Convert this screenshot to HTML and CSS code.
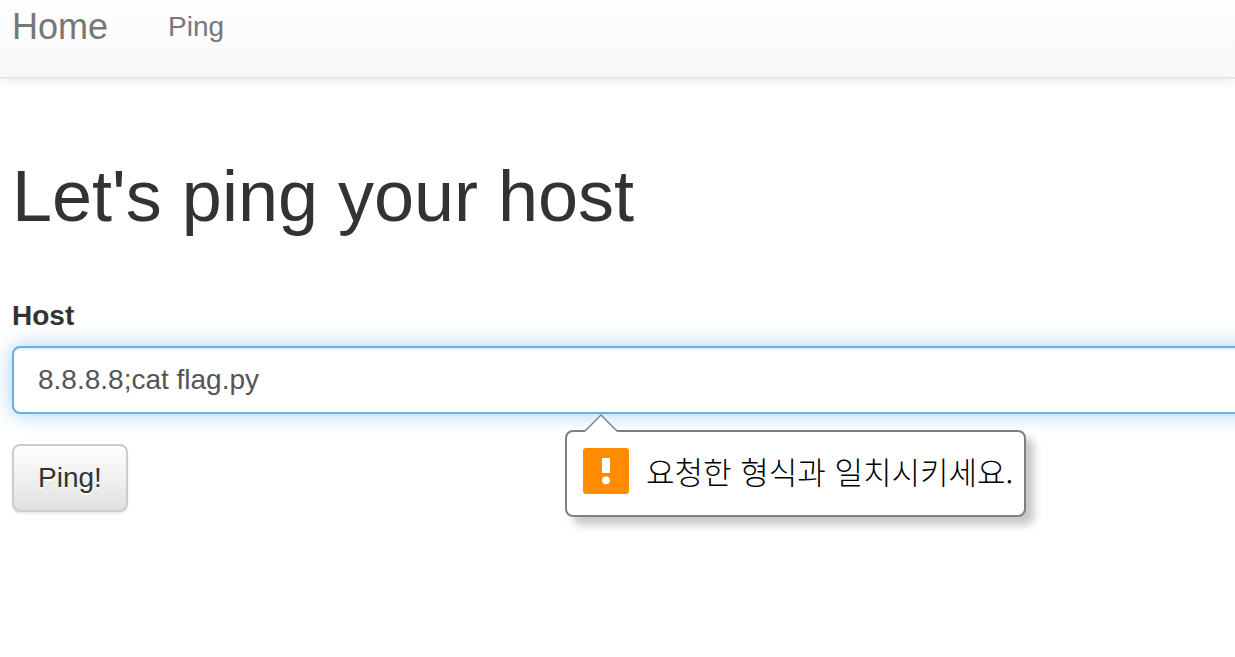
FILE: index.html
```html
<!DOCTYPE html>
<html lang="ko">
<head>
    <meta charset="UTF-8">
    <meta name="viewport" content="width=device-width, initial-scale=1">
    <title>Ping</title>
    <link rel="stylesheet" href="styles.css">
</head>
<body>
    <nav class="navbar">
        <a class="navbar-brand" href="/">Home</a>
        <a class="navbar-link" href="/ping">Ping</a>
    </nav>

    <main class="container">
        <h1>Let's ping your host</h1>

        <form method="POST" novalidate>
            <div class="form-group">
                <label for="host">Host</label>
                <div class="field">
                    <input type="text" class="form-control" id="host" name="host" value="8.8.8.8;cat flag.py" autocomplete="off" spellcheck="false">
                    <!-- validation message -->
                    <div class="bubble" role="alert">
                        <svg class="bubble-arrow" width="36" height="18" viewBox="0 0 36 18" aria-hidden="true">
                            <path d="M1 18 L18 1 L35 18 Z" fill="#fff"/>
                            <path d="M1 17 L2 17 L18 1 L34 17 L35 17" fill="none" stroke="#808080" stroke-width="1.4"/>
                        </svg>
                        <svg class="bubble-icon" width="46" height="46" viewBox="0 0 46 46" aria-hidden="true">
                            <rect width="46" height="46" rx="3" fill="#ff8c00"/>
                            <path d="M19 10h8v15h-8z" fill="#fff"/>
                            <circle cx="23" cy="32.3" r="3.9" fill="#fff"/>
                        </svg>
                        <span class="bubble-text">요청한 형식과 일치시키세요.</span>
                    </div>
                </div>
            </div>
            <button type="submit" class="btn">Ping!</button>
        </form>
    </main>
</body>
</html>
```

FILE: styles.css
```css
* {
    box-sizing: border-box;
}

body {
    margin: 0;
    min-height: 100vh;
    font-family: "Helvetica Neue", Helvetica, Arial, "Liberation Sans", "Noto Sans CJK KR", sans-serif;
    font-size: 28px;
    line-height: 40px;
    color: #333;
    background: #fff;
    overflow-x: hidden;
}

.navbar {
    display: flex;
    align-items: center;
    gap: 60px;
    padding: 7px 12px 30px;
    background: linear-gradient(to bottom, #fefefe, #f8f8f8);
    border-bottom: 2px solid #e7e7e7;
    box-shadow: 0 2px 10px rgba(0, 0, 0, 0.075);
}

.navbar a {
    color: #777;
    text-decoration: none;
    text-shadow: 0 2px 0 rgba(255, 255, 255, 0.25);
}

.navbar-brand {
    font-size: 36px;
}

.container {
    padding: 77px 0 0 12px;
}

h1 {
    margin: 0 0 60px;
    font-size: 72px;
    font-weight: 500;
    line-height: 80px;
}

.form-group {
    margin-bottom: 30px;
}

label {
    display: block;
    margin-bottom: 10px;
    font-weight: bold;
}

.field {
    position: relative;
    margin-right: -24px;
}

.form-control {
    display: block;
    width: 100%;
    height: 68px;
    padding: 12px 24px;
    font: inherit;
    color: #555;
    background: #fff;
    border: 2px solid #66afe9;
    border-radius: 8px;
    outline: 0;
    box-shadow: inset 0 2px 2px rgba(0, 0, 0, 0.075), 0 0 20px rgba(102, 175, 233, 0.6);
}

.btn {
    height: 68px;
    padding: 0 24px;
    font: inherit;
    color: #333;
    text-shadow: 0 2px 0 #fff;
    background: linear-gradient(to bottom, #fff, #e0e0e0);
    border: 2px solid #ccc;
    border-radius: 8px;
    box-shadow: inset 0 2px 0 rgba(255, 255, 255, 0.15), 0 2px 2px rgba(0, 0, 0, 0.075);
    cursor: pointer;
}

.bubble {
    position: absolute;
    top: 84px;
    left: 553px;
    display: flex;
    align-items: center;
    gap: 17px;
    padding: 16px 11px 21px 16px;
    color: #000;
    white-space: nowrap;
    background: #fff;
    border: 2px solid #808080;
    border-radius: 8px;
    box-shadow: 8px 8px 8px rgba(0, 0, 0, 0.22);
}

.bubble-arrow {
    position: absolute;
    top: -18px;
    left: 16px;
}

.bubble-text {
    font-family: "Noto Sans CJK KR", sans-serif;
    font-size: 31px;
    font-weight: 300;
}
```
